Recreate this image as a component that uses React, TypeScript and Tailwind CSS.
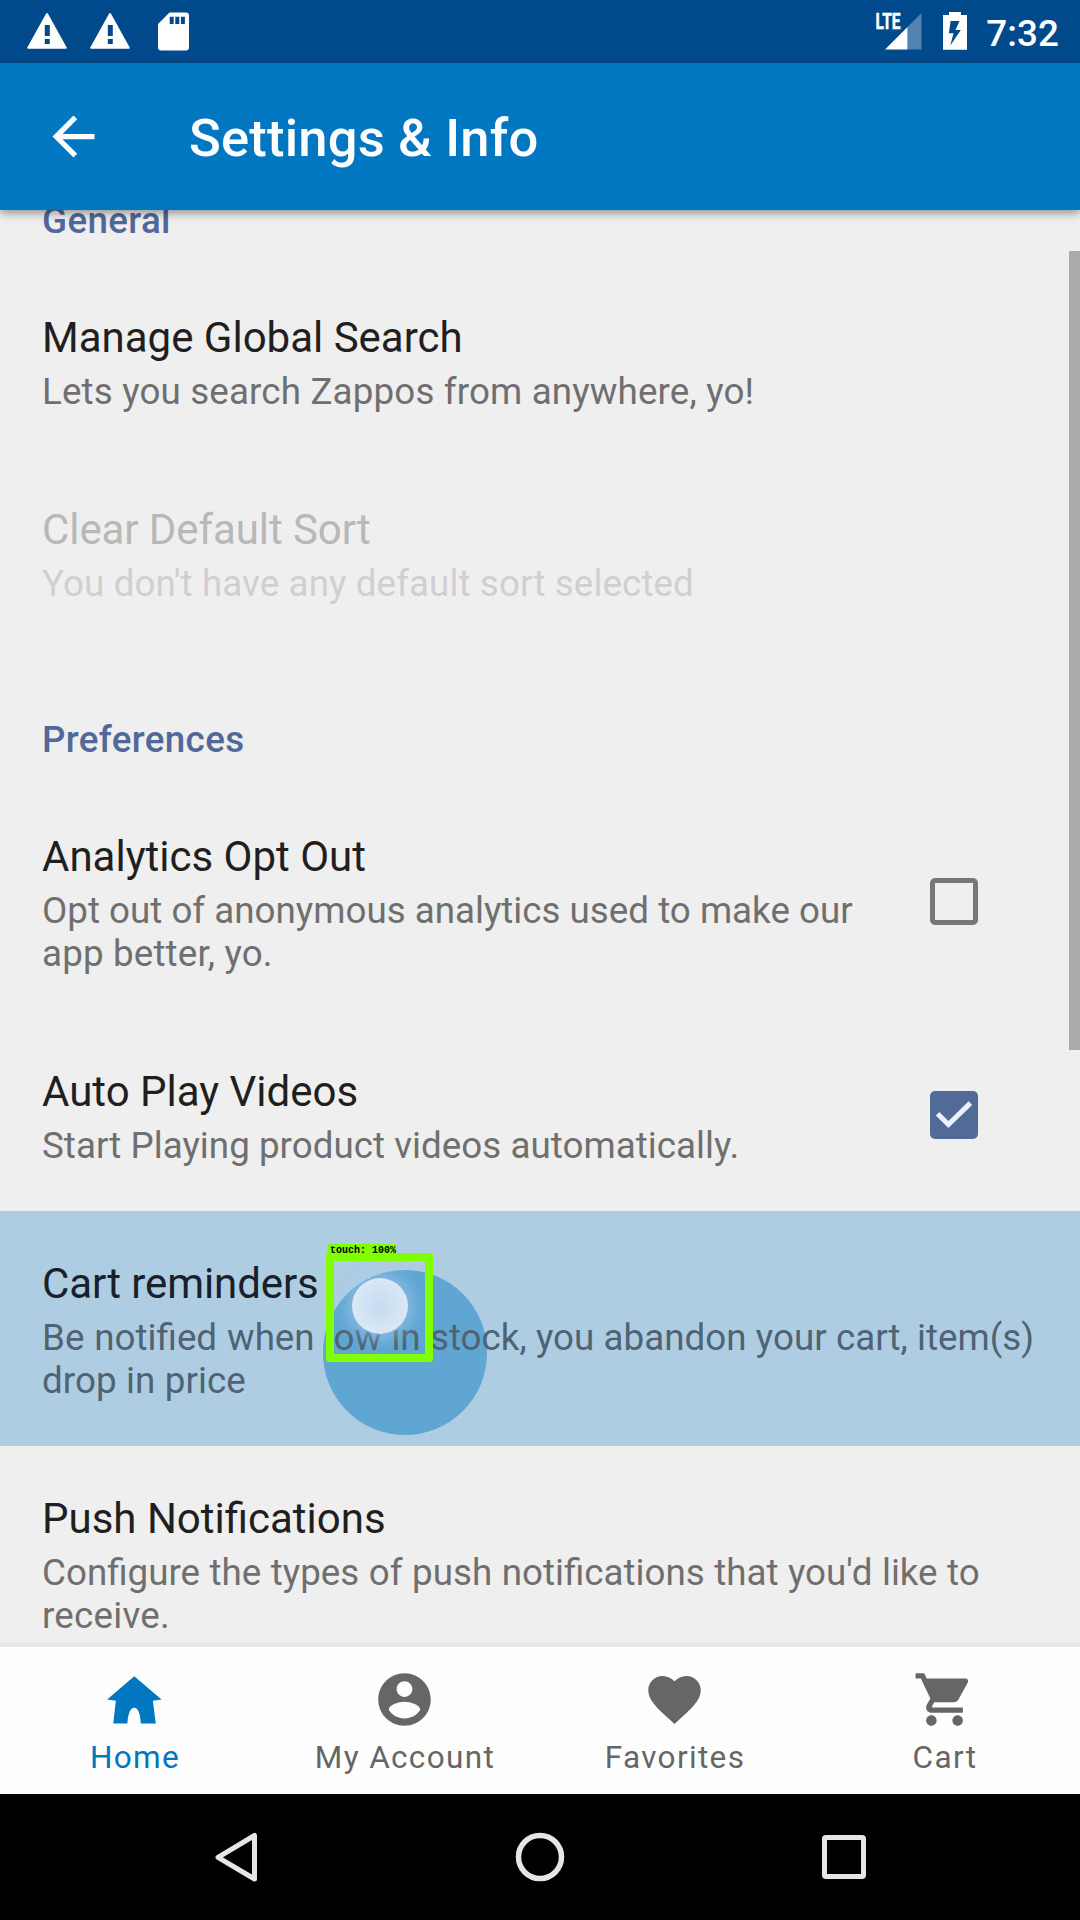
import type { ReactNode } from "react";

function Header({ children, className = "" }: { children: ReactNode; className?: string }) {
  return (
    <h2 className={`h-[134px] text-[36.75px] leading-[43px] font-medium tracking-[0.35px] text-[#50699a] ${className}`}>
      {children}
    </h2>
  );
}

function Row({
  title,
  lines,
  disabled,
  active,
  control,
  pad = "pt-[48px] pb-[44px]",
  tracking = "",
}: {
  title: string;
  lines: ReactNode[];
  disabled?: boolean;
  active?: boolean;
  control?: ReactNode;
  pad?: string;
  tracking?: string;
}) {
  return (
    <div
      className={`relative -mx-[42px] flex items-center justify-between pr-[102.5px] pl-[42px] ${active ? "bg-[#aecde3]" : ""}`}
    >
      {active && (
        <div className="absolute top-[59px] left-[322.5px] size-[164.5px] rounded-full bg-[#60a6d3]" />
      )}
      <div className={`relative whitespace-nowrap ${pad}`}>
        <div
          className={`text-[42px] leading-[50px] ${disabled ? "tracking-[-0.08px] text-[#b8b8b8]" : active ? "tracking-[-0.08px] text-[#18202a]" : "text-[#1f1f1f]"}`}
        >
          {title}
        </div>
        <div
          className={`mt-[7px] text-[36.75px] leading-[43px] ${tracking} ${disabled ? "text-[#cfcfcf]" : active ? "text-[#4f6373]" : "text-[#6f6f6f]"}`}
        >
          {lines.map((l, i) => (
            <div key={i}>{l}</div>
          ))}
        </div>
      </div>
      {control}
      {active && <TouchMarker />}
    </div>
  );
}

function TouchMarker() {
  return (
    <>
      <div className="absolute top-[67px] left-[352px] size-[56px] rounded-full bg-[radial-gradient(circle,#c5dcf0_0%,#dbe9f7_75%,#cfdff5_100%)] shadow-[0_0_14px_6px_rgba(170,208,236,0.5),0_0_2px_1px_rgba(125,150,215,0.7)]" />
      <div className="absolute top-[42px] left-[326px] h-[109px] w-[107px] rounded-[3px] border-8 border-[#80ff00]" />
      <div className="absolute top-[33px] left-[328px] h-[12px] w-[68px] bg-[#80ff00] pl-[2px] font-['Liberation_Mono',monospace] text-[10px] leading-[14px] font-bold whitespace-nowrap text-black">
        touch: 100%
      </div>
    </>
  );
}

function Unchecked() {
  return <div className="size-[47.5px] rounded-[5px] border-[5px] border-[#777777]" />;
}

function Checked() {
  return (
    <div className="size-[47.5px] rounded-[5px] bg-[#516a97]">
      <svg viewBox="0 0 47 47" className="size-full" fill="none" stroke="#e9f2fc" strokeWidth="5">
        <path d="M7.5 22.5 18.2 33.2 40 12" />
      </svg>
    </div>
  );
}

function Warning() {
  return (
    <svg width="40" height="36" viewBox="0 0 40 36">
      <path
        fill="#fff"
        fillRule="evenodd"
        d="M19 .8q1-1.6 2 0L39.7 34.4q.6 1.3-1 1.3H1.3q-1.6 0-1-1.3zM17.8 12v11h5V12zm0 14v5h5v-5z"
      />
    </svg>
  );
}

function StatusBar() {
  return (
    <div className="flex h-[63px] items-start bg-[#004a8c] pt-[12px] pr-[21px] pl-[27px]">
      <div className="pt-px"><Warning /></div>
      <div className="ml-[23px] pt-px"><Warning /></div>
      <svg className="ml-[28px]" width="31" height="39" viewBox="0 0 31 39">
        <path
          fill="#fff"
          fillRule="evenodd"
          d="M11.5 .5H28q3 0 3 3V35.5q0 3-3 3H3q-3 0-3-3V12zM11.7 4.7V12h4V4.7zm5.6 0V12h4V4.7zm5.6 0V12h4V4.7z"
        />
      </svg>
      <svg className="ml-auto overflow-visible" width="46" height="38" viewBox="0 0 46 38">
        <text
          x="-0.5"
          y="17"
          fill="#fff"
          stroke="#fff"
          strokeWidth="0.5"
          fontFamily="Roboto, sans-serif"
          fontWeight="700"
          fontSize="22"
          textLength="25"
          lengthAdjust="spacingAndGlyphs"
        >
          LTE
        </text>
        <path d="M31.5 15 45.5 1V37.5H31.5z" fill="#5282b0" />
        <path d="M9 37.5 31.5 15V37.5z" fill="#fff" />
      </svg>
      <svg className="ml-[21px]" width="24" height="38" viewBox="0 0 24 38">
        <path
          fill="#fff"
          fillRule="evenodd"
          d="M6 0H18V3H24V37.7H0V3H6zM7.7 9 5.8 21.3H10.5L7.3 33.5 17.8 18H12.5L16.5 9z"
        />
      </svg>
      <div className="ml-[19.5px] text-[36.75px] leading-[43px] font-medium tracking-[0.1px] text-white">7:32</div>
    </div>
  );
}

function AppBar() {
  return (
    <div className="relative z-10 flex h-[147px] items-center bg-[#0077c0] pl-[42px] shadow-[0_3px_9px_rgba(0,0,0,0.4)]">
      <svg width="63" height="63" viewBox="0 0 24 24" fill="#fff">
        <path d="M20 11H7.83l5.59-5.59L12 4l-8 8 8 8 1.41-1.41L7.83 13H20z" />
      </svg>
      <h1 className="ml-[84px] pt-[3px] text-[52.5px] leading-[62px] font-medium tracking-[0.2px] text-white">
        Settings &amp; Info
      </h1>
    </div>
  );
}

function Tab({ label, active, children }: { label: string; active?: boolean; children: ReactNode }) {
  return (
    <div className={`flex flex-1 flex-col items-center pt-[21px] ${active ? "text-[#0077c0]" : "text-[#666666]"}`}>
      <svg className="mr-px" width="63" height="63" viewBox="0 0 24 24" fill="currentColor">
        {children}
      </svg>
      <span className="mt-[8px] text-[31.5px] leading-[37px] tracking-[1.35px]">{label}</span>
    </div>
  );
}

export default function App() {
  return (
    <div className="flex h-[1920px] w-[1080px] flex-col overflow-hidden bg-[#efefef] font-[Roboto,sans-serif]">
      <StatusBar />
      <AppBar />
      <main className="relative min-h-0 flex-1 overflow-hidden px-[42px]">
        <div className="-mt-[78px]">
          <Header className="pt-[67px]">General</Header>
          <Row
            title="Manage Global Search"
            lines={["Lets you search Zappos from anywhere, yo!"]}
            pad="pt-[47px] pb-[45px]"
            tracking="tracking-[0.15px]"
          />
          <Row
            title="Clear Default Sort"
            lines={["You don't have any default sort selected"]}
            pad="pt-[47px] pb-[45px]"
            tracking="tracking-[0.1px]"
            disabled
          />
          <Header className="pt-[68px]">Preferences</Header>
          <Row
            title="Analytics Opt Out"
            lines={[
              "Opt out of anonymous analytics used to make our",
              <span className="tracking-[0.15px]">app better, yo.</span>,
            ]}
            control={<Unchecked />}
          />
          <Row
            title="Auto Play Videos"
            lines={["Start Playing product videos automatically."]}
            tracking="tracking-[0.03px]"
            control={<Checked />}
          />
          <Row
            title="Cart reminders"
            lines={[
              <>
                <span className="[word-spacing:0.8px]">Be notified when </span>
                <span className="[word-spacing:0.2px]">low in stock, you abandon your cart, item(s)</span>
              </>,
              <span className="tracking-[0.1px]">drop in price</span>,
            ]}
            active
          />
          <Row
            title="Push Notifications"
            lines={[
              <span className="[word-spacing:0.4px]">Configure the types of push notifications that you'd like to</span>,
              <span className="tracking-[0.25px]">receive.</span>,
            ]}
          />
        </div>
        <div className="absolute top-[41px] right-0 h-[799px] w-[11px] bg-[#aaaaaa]" />
      </main>
      <nav className="relative flex h-[147px] bg-[#fefefe] shadow-[0_-4px_0_#e8e8e8]">
        <Tab label="Home" active>
          <path d="M11.9 3.1 22.3 12 19 12.5 20.1 21.1H14.4C14.2 17.2 13.3 15.1 11.9 15.1S9.5 17.2 9.3 21.1H3.9L4.9 12.5 1.6 12z" />
        </Tab>
        <Tab label="My Account">
          <path d="M12 2C6.48 2 2 6.48 2 12s4.48 10 10 10 10-4.48 10-10S17.52 2 12 2zm0 3c1.66 0 3 1.34 3 3s-1.34 3-3 3-3-1.34-3-3 1.34-3 3-3zm0 14.2c-2.5 0-4.71-1.28-6-3.22.03-1.99 4-3.08 6-3.08 1.99 0 5.97 1.09 6 3.08-1.29 1.94-3.5 3.22-6 3.22z" />
        </Tab>
        <Tab label="Favorites">
          <path d="M12 21.35l-1.45-1.32C5.4 15.36 2 12.28 2 8.5 2 5.42 4.42 3 7.5 3c1.74 0 3.41.81 4.5 2.09C13.09 3.81 14.76 3 16.5 3 19.58 3 22 5.42 22 8.5c0 3.78-3.4 6.86-8.55 11.54L12 21.35z" />
        </Tab>
        <Tab label="Cart">
          <path d="M7 18c-1.1 0-1.99.9-1.99 2S5.9 22 7 22s2-.9 2-2-.9-2-2-2zM1 2v2h2l3.6 7.59-1.35 2.45c-.16.28-.25.61-.25.96 0 1.1.9 2 2 2h12v-2H7.42c-.14 0-.25-.11-.25-.25l.03-.12.9-1.63h7.45c.75 0 1.41-.41 1.75-1.03l3.58-6.49c.08-.14.12-.31.12-.48 0-.55-.45-1-1-1H5.21l-.94-2H1zm16 16c-1.1 0-1.99.9-1.99 2s.89 2 1.99 2 2-.9 2-2-.9-2-2-2z" />
        </Tab>
      </nav>
      <div className="flex h-[126px] items-center justify-between bg-black pr-[214px] pl-[214px]">
        <svg width="44" height="52" viewBox="0 0 44 52" fill="none" stroke="#e6e6e6" strokeWidth="5" strokeLinejoin="round">
          <path d="M40.5 4.5V48L4 26.3z" />
        </svg>
        <svg width="50" height="50" viewBox="0 0 50 50" fill="none" stroke="#e6e6e6" strokeWidth="5.5">
          <circle cx="25" cy="25" r="21.5" />
        </svg>
        <div className="size-[44px] rounded-[4px] border-[5px] border-[#e6e6e6]" />
      </div>
    </div>
  );
}
